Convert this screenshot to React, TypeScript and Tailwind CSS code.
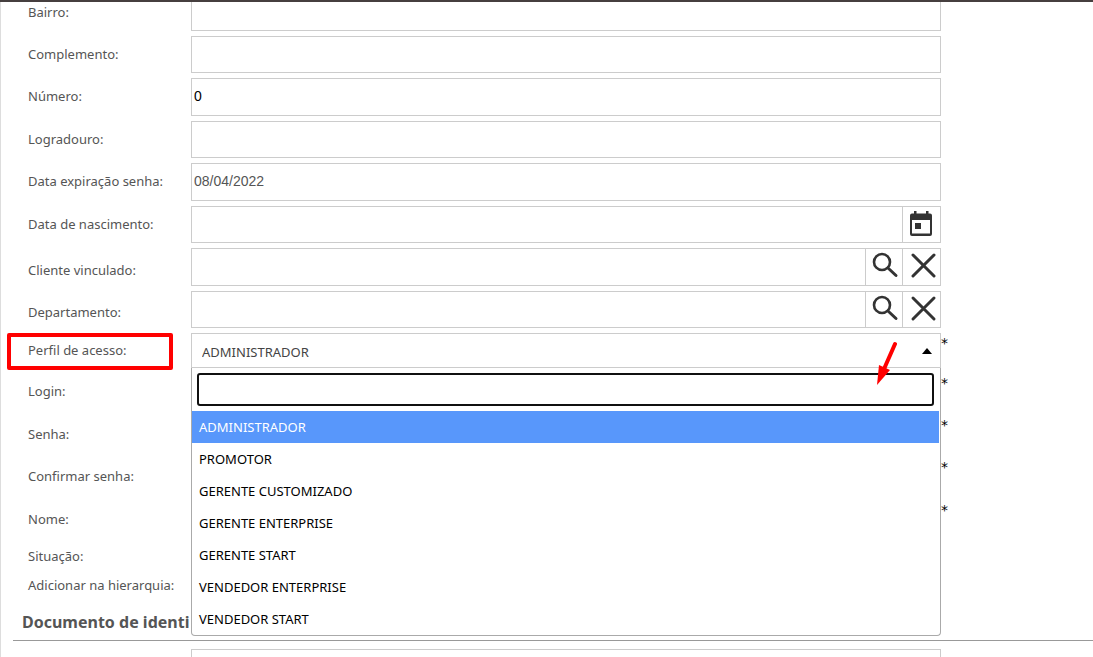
import { useState } from 'react';
import type { ReactNode } from 'react';

const profiles = [
  'ADMINISTRADOR',
  'PROMOTOR',
  'GERENTE CUSTOMIZADO',
  'GERENTE ENTERPRISE',
  'GERENTE START',
  'VENDEDOR ENTERPRISE',
  'VENDEDOR START',
];

const fieldClass =
  "block h-full w-full min-w-0 bg-white px-[2px] pb-[2px] font-['Liberation_Sans',sans-serif] text-sm outline-none";

function CalendarIcon() {
  return (
    <svg className="h-7 w-7" viewBox="0 0 28 28" fill="none">
      <path d="M5 4.500h18a2 2 0 0 1 2 2V25a2 2 0 0 1-2 2H5a2 2 0 0 1-2-2V6.500a2 2 0 0 1 2-2Z" fill="#333" />
      <path d="M5 11h18v13.500H5Z" fill="#fff" />
      <path d="M7 2h2.500v3H7ZM19 2h2.500v3H19ZM8 14h6v6H8Z" fill="#333" />
    </svg>
  );
}

function SearchIcon() {
  return (
    <svg className="h-7 w-7" viewBox="0 0 28 28" fill="none" stroke="#333">
      <circle cx="11" cy="11" r="8" strokeWidth="2.600" />
      <path d="M17 17l8 7.500" strokeWidth="3" strokeLinecap="round" />
    </svg>
  );
}

function CloseIcon() {
  return (
    <svg className="h-7 w-7" viewBox="0 0 28 28" fill="none" stroke="#333">
      <path d="M4 3l21 21M25 3L4 24" strokeWidth="3" strokeLinecap="round" />
    </svg>
  );
}

type RowProps = {
  id: string;
  label: string;
  className?: string;
  labelClass?: string;
  required?: boolean;
  children?: ReactNode;
};

function Row({ id, label, className = '', labelClass = 'items-center pb-[2px]', required, children }: RowProps) {
  return (
    <div className={`flex pb-[5px] ${className}`}>
      <label htmlFor={id} className={`flex w-[163px] shrink-0 whitespace-nowrap ${labelClass}`}>
        {label}
      </label>
      <div className="relative min-w-0 flex-1">{children}</div>
      <div className="w-[152px] shrink-0 font-['DejaVu_Sans',sans-serif] text-sm leading-5 text-black">
        {required && <span>*</span>}
      </div>
    </div>
  );
}

function TextField({ id, value = '', type = 'text', className = 'text-black' }: { id: string; value?: string; type?: string; className?: string }) {
  return (
    <div className="h-full border border-[#ccc]">
      <input id={id} type={type} defaultValue={value} className={`${fieldClass} ${className}`} />
    </div>
  );
}

function LookupField({ id, name }: { id: string; name: string }) {
  return (
    <div className="flex h-full border border-[#ccc]">
      <input id={id} type="text" className={fieldClass} />
      <button type="button" aria-label={`Pesquisar ${name}`} className="flex w-[37px] shrink-0 justify-center border-l border-[#ccc] pt-[2px] pl-px">
        <SearchIcon />
      </button>
      <button type="button" aria-label={`Limpar ${name}`} className="flex w-[38px] shrink-0 justify-center border-l border-[#ccc] pt-[3px] pl-[3px]">
        <CloseIcon />
      </button>
    </div>
  );
}

function ProfileSelect() {
  const [selected, setSelected] = useState('ADMINISTRADOR');
  const [search, setSearch] = useState('');
  const options = profiles.filter((p) => p.includes(search.toUpperCase()));

  return (
    <>
      <div className="relative h-full border border-[#ccc]">
        <select
          id="perfil"
          value={selected}
          onChange={(e) => setSelected(e.target.value)}
          className="h-full w-full appearance-none bg-white px-[10px] pt-[2px] text-[#444] outline-none"
        >
          {profiles.map((p) => (
            <option key={p}>{p}</option>
          ))}
        </select>
        <svg className="pointer-events-none absolute top-[14px] right-2 h-[6px] w-[10px]" viewBox="0 0 10 6">
          <path d="M0 6L5 0l5 6Z" fill="#000" />
        </svg>
      </div>
      <div className="absolute top-full right-0 left-0 z-10 rounded-b border border-t-0 border-[#aaa] bg-white">
        <div className="py-[5px] pr-[6px] pl-[5px]">
          <input
            type="search"
            aria-label="Pesquisar perfil"
            value={search}
            onChange={(e) => setSearch(e.target.value)}
            className="block h-[33px] w-full rounded-[3px] border-2 border-[#101010] px-1 text-black outline-none"
          />
        </div>
        <ul role="listbox" aria-label="Perfil de acesso" className="pr-px text-black">
          {options.map((p) => (
            <li
              key={p}
              role="option"
              aria-selected={p === selected}
              onClick={() => setSelected(p)}
              className="h-8 cursor-pointer px-[7px] leading-8 aria-selected:bg-[#5897fb] aria-selected:text-white"
            >
              {p}
            </li>
          ))}
        </ul>
      </div>
      <svg className="pointer-events-none absolute top-[8px] right-11 z-20 h-11 w-5" viewBox="0 0 20 44">
        <path d="M18 3L7 28" stroke="#f00" strokeWidth="4" strokeLinecap="round" />
        <path d="M0 44L2 24l11 5Z" fill="#f00" />
      </svg>
    </>
  );
}

export default function App() {
  return (
    <main className="h-screen overflow-hidden border-t-2 border-[#463f3f] bg-white font-['Noto_Sans',sans-serif] text-[13px] leading-5 text-[#555]">
      <form className="min-h-full border-l border-[#ddd]">
        <div className="pl-[27px]">
          <Row id="bairro" label="Bairro:" className="h-[34px]" labelClass="items-start">
            <div className="h-full border border-t-0 border-[#ccc]">
              <input id="bairro" type="text" className={fieldClass} />
            </div>
          </Row>
          <Row id="complemento" label="Complemento:" className="h-[42px]">
            <TextField id="complemento" />
          </Row>
          <Row id="numero" label="Número:" className="h-[43px]">
            <TextField id="numero" value="0" />
          </Row>
          <Row id="logradouro" label="Logradouro:" className="h-[42px]">
            <TextField id="logradouro" />
          </Row>
          <Row id="expiracao" label="Data expiração senha:" className="h-[43px]">
            <TextField id="expiracao" value="08/04/2022" className="text-[#555]" />
          </Row>
          <Row id="nascimento" label="Data de nascimento:" className="h-[42px]">
            <div className="flex h-full border border-[#ccc]">
              <input id="nascimento" type="text" className={fieldClass} />
              <button type="button" aria-label="Abrir calendário" className="flex w-[38px] shrink-0 justify-center border-l border-[#ccc] pt-[2px] pr-px">
                <CalendarIcon />
              </button>
            </div>
          </Row>
          <Row id="cliente" label="Cliente vinculado:" className="h-[43px]" labelClass="items-center pt-[5px]">
            <LookupField id="cliente" name="cliente" />
          </Row>
          <Row id="departamento" label="Departamento:" className="h-[42px]" labelClass="items-center pt-[5px]">
            <LookupField id="departamento" name="departamento" />
          </Row>
          <div className="relative">
            <div className="pointer-events-none absolute -left-[21px] h-[37px] w-[166px] rounded-xs border-4 border-[#f00]" />
            <Row id="perfil" label="Perfil de acesso:" className="h-10" required>
              <ProfileSelect />
            </Row>
          </div>
          <Row id="login" label="Login:" className="h-[42px]" required>
            <TextField id="login" />
          </Row>
          <Row id="senha" label="Senha:" className="h-[42px]" labelClass="items-center" required>
            <TextField id="senha" type="password" />
          </Row>
          <Row id="confirmar" label="Confirmar senha:" className="h-[43px]" labelClass="items-center" required>
            <TextField id="confirmar" type="password" />
          </Row>
          <Row id="nome" label="Nome:" className="h-[42px]" labelClass="items-center" required>
            <TextField id="nome" />
          </Row>
          <Row id="situacao" label="Situação:" className="h-8" labelClass="items-center">
            <input id="situacao" type="checkbox" className="mt-2" />
          </Row>
          <Row id="hierarquia" label="Adicionar na hierarquia:" className="h-7">
            <input id="hierarquia" type="checkbox" className="mt-1" />
          </Row>
        </div>
        <h2 className="ml-3 border-b border-[#999] pt-2 pb-[6px] pl-[9px] text-base leading-6 font-bold">
          Documento de identi
        </h2>
        <div className="pt-2 pl-[27px]">
          <Row id="documento" label="" className="h-[43px]">
            <TextField id="documento" />
          </Row>
        </div>
      </form>
    </main>
  );
}
